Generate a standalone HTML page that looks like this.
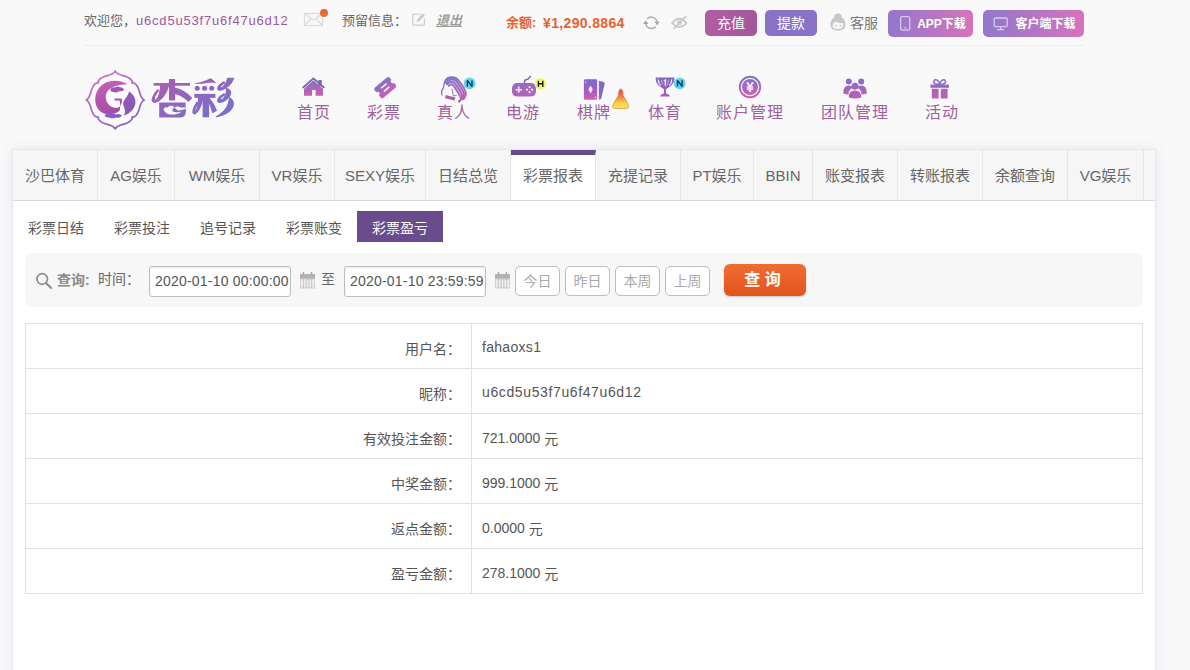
<!DOCTYPE html>
<html lang="zh">
<head>
<meta charset="utf-8">
<title>彩票盈亏</title>
<style>
*{box-sizing:border-box;margin:0;padding:0}
html,body{width:1190px;height:670px;overflow:hidden}
body{background:#f9f9f9;font-family:"Liberation Sans","Noto Sans CJK SC",sans-serif;font-size:13px;color:#666;position:relative}
.abs{position:absolute;white-space:nowrap}
/* top bar */
.top{position:absolute;left:0;top:0;width:1190px;height:45px}
.top .t{position:absolute;top:12px;height:18px;line-height:18px;font-size:13px;color:#666;white-space:nowrap}
.hr{position:absolute;left:84px;top:45px;width:1000px;height:1px;background:#ededed}
.btn{position:absolute;top:10px;height:26px;line-height:27px;border-radius:5px;color:#fff;font-size:14px;text-align:center;white-space:nowrap}
/* nav */
.nav{position:absolute;top:103px;white-space:nowrap;color:#a05f9d;font-size:16px;line-height:20px;letter-spacing:1px}
.badge{position:absolute;width:12px;height:12px;border-radius:6px;font-size:9px;line-height:12px;font-weight:bold;text-align:center;color:#123}
/* main box */
.main{position:absolute;left:12px;top:149px;width:1144px;height:540px;background:#fff;border:1px solid #e9e6ee;box-shadow:0 0 11px rgba(170,150,215,.2)}
.tabs{position:absolute;left:0;top:0;width:1142px;height:51px;background:#f7f6f6;border-bottom:1px solid #d8d8d8}
.tab{position:absolute;top:0;height:50px;line-height:52px;font-size:15px;color:#666;text-align:center;border-right:1px solid #e6e6e6;white-space:nowrap}
.tab.on{background:#fff;border-top:5px solid #674c8c;line-height:42px}
.sub{position:absolute;top:61px;height:31px;line-height:34px;width:86px;text-align:center;font-size:14px;color:#555;white-space:nowrap}
.sub.on{background:#6a4c8c;color:#fff}
.q{position:absolute;left:12px;top:103px;width:1118px;height:54px;background:#f7f7f7;border-radius:8px}
.q .x{position:absolute;font-size:14px;color:#666;white-space:nowrap;line-height:20px}
.inp{position:absolute;top:13px;height:31px;width:142px;border:1px solid #bdbdbd;border-radius:3px;background:#fff;font-size:14px;line-height:29px;padding-left:5px;color:#555;letter-spacing:.2px;box-shadow:inset 0 1px 2px rgba(0,0,0,.08);white-space:nowrap;overflow:hidden}
.sb{position:absolute;top:13px;width:45px;height:30px;border:1px solid #bcbcbc;border-radius:5px;background:#fff;color:#aaa;font-size:14px;line-height:28px;text-align:center}
.go{position:absolute;left:699px;text-indent:-5px;top:11px;width:82px;height:32px;border-radius:6px;background:linear-gradient(#f06c33,#e2541d);color:#fff;font-size:16px;font-weight:bold;line-height:32px;text-align:center;box-shadow:0 1px 2px rgba(0,0,0,.2)}
table{table-layout:fixed;position:absolute;left:12px;top:173px;width:1118px;border-collapse:collapse;font-size:14px;color:#555}
td{border:1px solid #e0e0e0;height:45px;vertical-align:middle;white-space:nowrap}
td.l{width:446px;text-align:right;padding-right:10px;padding-top:3px}
td.v{padding-left:10px;padding-top:3px}
.n{position:relative;top:-1px}
</style>
</head>
<body>
<div class="top">
  <span class="t" style="left:84px">欢迎您，</span>
  <span class="t" style="left:136px;color:#9b5a99;letter-spacing:.8px">u6cd5u53f7u6f47u6d12</span>
  <span class="t" style="left:342px">预留信息：</span>
  <span class="t" style="left:436px;color:#9e9e9e;font-style:italic;font-weight:bold;text-decoration:underline">退出</span>
  <span class="t" style="left:506px;top:14px;color:#e8632e;font-weight:bold">余额:</span>
  <span class="t" style="left:543px;top:14px;color:#e8632e;font-weight:bold;font-size:14px;letter-spacing:.35px">¥1,290.8864</span>
  <div class="btn" style="left:705px;width:52px;background:linear-gradient(90deg,#b15ea3,#a4579b)">充值</div>
  <div class="btn" style="left:765px;width:52px;background:#8a72c8">提款</div>
  <span class="t" style="left:850px;top:14px;font-size:14px;color:#777">客服</span>
  <div class="btn" style="left:888px;width:85px;height:27px;line-height:28px;font-size:12px;font-weight:bold;background:linear-gradient(90deg,#8f78cd,#d873bb);padding-left:22px">APP下载</div>
  <div class="btn" style="left:983px;width:101px;height:27px;line-height:28px;font-size:12px;font-weight:bold;background:linear-gradient(90deg,#8f78cd,#d873bb);padding-left:24px">客户端下载</div>
</div>
<div class="hr"></div>


<!-- header icons -->
<svg class="abs" style="left:0;top:0" width="1190" height="140" viewBox="0 0 1190 140">
<defs>
<linearGradient id="g" x1="0" y1="0" x2="0" y2="1"><stop offset="0" stop-color="#8670c9"></stop><stop offset="1" stop-color="#c95fb1"></stop></linearGradient>
<linearGradient id="gl" gradientUnits="userSpaceOnUse" x1="152" y1="78" x2="184.4" y2="142.8"><stop offset="0" stop-color="#b45ab0"></stop><stop offset=".5" stop-color="#8c66c2"></stop><stop offset="1" stop-color="#7472d2"></stop></linearGradient>
<linearGradient id="ge" x1="0" y1="0" x2="0.6" y2="1"><stop offset="0" stop-color="#cf74c4"></stop><stop offset="1" stop-color="#8a68c0"></stop></linearGradient>
<linearGradient id="gc" x1="0" y1="0" x2="0.3" y2="1"><stop offset="0" stop-color="#c662b4"></stop><stop offset="1" stop-color="#a54ea6"></stop></linearGradient>
<linearGradient id="gh" gradientUnits="userSpaceOnUse" x1="446" y1="76" x2="462" y2="100"><stop offset="0" stop-color="#7f72cc"></stop><stop offset="1" stop-color="#b95db4"></stop></linearGradient>
<linearGradient id="gt" x1="0" y1="0" x2="0" y2="1"><stop offset="0" stop-color="#8068c4"></stop><stop offset="1" stop-color="#ac5cb2"></stop></linearGradient>
<linearGradient id="gu" gradientUnits="userSpaceOnUse" x1="0" y1="77" x2="0" y2="99"><stop offset="0" stop-color="#8270ca"></stop><stop offset="1" stop-color="#c05eb2"></stop></linearGradient>
<linearGradient id="gd" x1="0" y1="0" x2="0" y2="1"><stop offset="0" stop-color="#f25a40"></stop><stop offset="1" stop-color="#e8742c"></stop></linearGradient>
</defs>
<!-- envelope -->
<g fill="none" stroke="#dcdcdc" stroke-width="1.2">
<rect x="304.5" y="13.5" width="18" height="12" fill="#f8f8f8"></rect>
<path d="M304.5 13.5L313.5 20L322.5 13.5M304.5 25.5L311.2 18.4M322.5 25.5L315.8 18.4"></path>
</g>
<circle cx="324" cy="13" r="4" fill="url(#gd)"></circle>
<!-- edit -->
<path d="M420.6 14.2H413.6Q412.8 14.2 412.8 15V24.4Q412.8 25.2 413.6 25.2H423.6Q424.4 25.2 424.4 24.4V18.6" fill="none" stroke="#d0d0d0" stroke-width="1.3"></path>
<path d="M416.6 21.8L417.4 19.2L422.8 13.4L424.8 15.2L419.2 21.2Z" fill="#cacaca"></path>
<!-- refresh -->
<g fill="none" stroke="#adadad" stroke-width="1.4">
<path d="M647.0 19.1A5.7 5.7 0 0 1 657.0 22.0"></path>
<path d="M655.8 26.5A5.7 5.7 0 0 1 645.8 23.6"></path>
</g>
<path d="M654.5 21.6H659.7L657.1 25.4Z" fill="#a6a6a6"></path>
<path d="M643.1 24.0H648.3L645.7 20.2Z" fill="#a6a6a6"></path>
<!-- eye slash -->
<g fill="none" stroke="#c9c9c9" stroke-width="1.9">
<path d="M672.2 22.8Q679.4 14.6 686.4 22.8Q679.4 31 672.2 22.8Z"></path>
<circle cx="679.4" cy="22.8" r="1.6" stroke-width="1.6"></circle>
<path d="M686.2 16.2L673.6 29" stroke-width="1.7"></path>
</g>
<!-- service head -->
<g>
<path d="M838 13.4C840.8 13.4 842.2 15.6 841.6 17.4C844.4 18.6 845.7 21.6 845.5 25C845.3 28.6 842 30.7 838 30.7C834 30.7 830.7 28.6 830.5 25C830.3 21.6 831.6 18.6 834.4 17.4C833.8 15.6 835.2 13.4 838 13.4Z" fill="#c8c8c8"></path>
<path d="M832.6 25.4Q833 22.6 835.8 21.4Q838.6 23.4 843.2 23.2Q844 28.9 838 29Q832.4 28.9 832.6 25.4Z" fill="#f7f7f7"></path>
<circle cx="835.7" cy="25.7" r=".85" fill="#c4c4c4"></circle><circle cx="840.5" cy="25.7" r=".85" fill="#c4c4c4"></circle>
</g>
<!-- phone -->
<g fill="none" stroke="#d9c9ef" stroke-width="1.3">
<rect x="900.6" y="16.6" width="9.2" height="13.6" rx="1.8"></rect>
<path d="M903.8 28H906.6" stroke-width="1"></path>
</g>
<!-- monitor -->
<g fill="none" stroke="#d9c9ef" stroke-width="1.3">
<rect x="994.2" y="18" width="13" height="8.6" rx="1"></rect>
<path d="M1000.7 26.6V29.4M997.2 29.6H1004.2"></path>
</g>

<!-- home -->
<path d="M318.4 80H321.8V86H318.4Z" fill="#8068b8"></path>
<path d="M302.7 87.9L313.4 78.4L324.3 87.9" fill="none" stroke="#7562ac" stroke-width="1.9"></path>
<path d="M313.4 80.3L304 88.7V95.8H312V90H315.6V95.8H323V88.7Z" fill="url(#g)"></path>
<!-- ticket -->
<g transform="translate(385.2 87.6) rotate(-40)" fill="url(#g)">
<path fill-rule="evenodd" d="M-9.8 -4.6A2 2 0 0 1 -7.8 -6.6H7.8A2 2 0 0 1 9.8 -4.6V-2A2 2 0 0 0 9.8 2V4.6A2 2 0 0 1 7.8 6.6H-7.8A2 2 0 0 1 -9.8 4.6V2A2 2 0 0 0 -9.8 -2ZM-3.6 -2.9V-1.4H3.6V-2.9ZM-3.6 1.4V2.9H3.6V1.4Z"></path>
</g>
<!-- girl -->
<path transform="translate(0 1.2)" d="M445 80.4C446.6 75.2 455 74 458.6 79.2C461 82.8 464.2 85.6 465.6 90.2C466.6 94 464.6 97 462.6 98.2L460 97.6C458.8 92.6 455.8 88.6 454.4 85.6C453.2 83.2 450.8 82.4 448.6 84.6Z" fill="url(#gh)" opacity=".45"></path>
<g fill="none" stroke="url(#gh)" stroke-width="1.75" stroke-linecap="round" transform="translate(0 1.2)">
<path d="M445 80.4C446.6 75.2 455 74 458.6 79.2C461 82.8 464.2 85.6 465.6 90.2C466.6 94 464.6 97 462.6 98.2"></path>
<path d="M445.8 81.8C448.6 77 454.6 77 457.2 80.8C459.2 84.4 462.4 87.4 463.8 91.4C464.6 94.4 463.2 96.4 461.4 97.6C460.6 98.8 460 99.8 459.2 100.6"></path>
<path d="M446.8 83.2C449.8 79.6 454 80.2 455.8 83.4C457.6 86.6 460.6 89.6 461.8 93C462.4 95 461.4 96.6 460.2 97.4"></path>
<path d="M448.6 84.6C450.8 82.4 453.2 83.2 454.4 85.6C455.8 88.6 458.6 91.6 459.8 94.8"></path>
<path d="M447.4 78.4C450.6 76.2 454.6 76.4 457 79" stroke-width="1"></path>
<path d="M445 80.4C443.4 83 444.2 85.6 442.8 87.8C441.2 89.6 441.2 91.6 442.2 93.8" stroke-width="1.3"></path>
<path d="M452.2 88C452.4 91 452.8 93.4 453.4 94.6L456.2 94.4" stroke-width="1"></path>
</g>
<path d="M445.8 95L455.4 97.6L454.6 100.6L445 98.2Z" fill="#b45cb0"></path>
<circle cx="459.2" cy="100.8" r=".9" fill="#6a5a9a"></circle>
<circle cx="469.6" cy="83.4" r="5.9" fill="#5fd6ea"></circle>
<path d="M467.4 86.6V80.4L472.0 86.6V80.4" fill="none" stroke="#0b3468" stroke-width="1.35" stroke-linejoin="bevel"></path>
<!-- gamepad -->
<g fill="url(#gu)">
<path d="M517.6 83H530.4Q536 83 536 88.6V91Q536 96.6 530.4 96.6H517.6Q512 96.6 512 91V88.6Q512 83 517.6 83Z"></path>
</g>
<path d="M524.4 82.6Q524.4 79.6 526.6 79.4Q528.4 79.4 529 78Q529.4 76.8 530.6 76.6" fill="none" stroke="#7d68c0" stroke-width="1.5" stroke-linecap="round"></path>
<path d="M517.9 86.6H519.5V88.9H521.8V90.5H519.5V92.8H517.9V90.5H515.6V88.9H517.9Z" fill="#f6eafa"></path>
<circle cx="529.6" cy="87.2" r="1.1" fill="#f6eafa"></circle><circle cx="529.6" cy="92.2" r="1.1" fill="#f6eafa"></circle><circle cx="527.1" cy="89.7" r="1.1" fill="#f6eafa"></circle><circle cx="532.1" cy="89.7" r="1.1" fill="#f6eafa"></circle>
<circle cx="540.5" cy="83.8" r="5.9" fill="#f3f46e"></circle>
<path d="M538.4 80.7V86.9M542.8 80.7V86.9M538.4 83.7H542.8" fill="none" stroke="#161616" stroke-width="1.35"></path>
<!-- cards -->
<defs><linearGradient id="gk" x1="0" y1="0" x2="0" y2="1"><stop offset="0" stop-color="#7d69c9"></stop><stop offset=".55" stop-color="#a45dc0"></stop><stop offset="1" stop-color="#d85cb2"></stop></linearGradient>
<linearGradient id="fl" x1="0" y1="0" x2="0" y2="1"><stop offset="0" stop-color="#ee5350"></stop><stop offset=".3" stop-color="#ee6648"></stop><stop offset=".5" stop-color="#f29a44"></stop><stop offset=".75" stop-color="#f6d948"></stop><stop offset="1" stop-color="#f3e35c"></stop></linearGradient>
<linearGradient id="fs" x1="0" y1="0" x2="0" y2="1"><stop offset="0" stop-color="#ee5350"></stop><stop offset=".45" stop-color="#e8803c"></stop><stop offset="1" stop-color="#e6a848"></stop></linearGradient></defs>
<g>
<path d="M598.9 80.8L603.6 81.9Q605 82.3 604.7 83.7L601.2 98.4Q600.9 99.6 599.6 99.5L598.9 99.5Z" fill="#8068c4"></path>
<rect x="583.9" y="79.2" width="13.3" height="20.6" rx="1.4" fill="url(#gk)"></rect>
<path d="M590.6 85.4L592.8 89.4L590.6 93.4L588.4 89.4Z" fill="#f6ecfa"></path>
<path d="M585.4 81L586.6 82.8L585.9 83.4L584.8 81.6Z" fill="#e6d6f4"></path>
<path d="M595.6 96.2L596.6 97.8L595.8 98.6L594.8 97Z" fill="#f3cfe8"></path>
</g>
<!-- flame -->
<path d="M620.7 88.8C622.6 90 623.2 92.6 622.9 95.6C625 98.4 627.4 102.4 628.6 106C629 107.6 628.4 108.5 627 108.5L614.4 108.5C613 108.5 612.4 107.6 612.8 106C614 102.4 616.6 98.4 618.6 95.6C618.3 92.6 619 90 620.7 88.8Z" fill="url(#fl)" stroke="url(#fs)" stroke-width=".9"></path>
<!-- trophy -->
<path d="M655.6 77.6H674.4Q674.6 84.5 668.6 87.4Q666.6 88.4 666.1 89.6V93.4Q669.5 93.9 670 96.6H660Q660.5 93.9 663.9 93.4V89.6Q663.4 88.4 661.4 87.4Q655.4 84.5 655.6 77.6Z" fill="url(#gt)"></path>
<g fill="none" stroke="#f5eefb" stroke-width="1.15">
<path d="M658.3 79.6Q658.3 83.2 660.6 85.6"></path><path d="M671.7 79.6Q671.7 83.2 669.4 85.6"></path>
<path d="M661.6 79.8Q661.6 82.6 662.6 84.6" stroke-width=".8" opacity=".7"></path><path d="M668.4 79.8Q668.4 82.6 667.4 84.6" stroke-width=".8" opacity=".7"></path>
<path d="M663.9 81L665.4 80V85.8" stroke-width="1.3"></path>
</g>
<circle cx="679.7" cy="83.4" r="5.9" fill="#5fd6ea"></circle>
<path d="M677.5 86.5V80.3L682.1 86.5V80.3" fill="none" stroke="#0b3468" stroke-width="1.35" stroke-linejoin="bevel"></path>
<!-- coin -->
<circle cx="750" cy="87" r="10.2" fill="none" stroke="url(#g)" stroke-width="1.9"></circle>
<circle cx="750" cy="87" r="8" fill="url(#g)"></circle>
<path d="M746.4 82.4H748.2L750 85.6L751.8 82.4H753.6L751.2 86.4H753V87.6H750.8V88.6H753V89.8H750.8V92H749.2V89.8H747V88.6H749.2V87.6H747V86.4H748.8Z" fill="#f7ecfa" stroke="#f7ecfa" stroke-width=".5"></path>
<!-- team -->
<g fill="url(#gu)">
<circle cx="848.8" cy="81.6" r="3"></circle><path d="M843.2 93.6Q843 85.4 848.8 85.4Q851.6 85.4 853 87.4Q848.6 89.6 848.4 94.4Q845 94.6 843.2 93.6Z"></path>
<circle cx="861.2" cy="81.6" r="3"></circle><path d="M866.8 93.6Q867 85.4 861.2 85.4Q858.4 85.4 857 87.4Q861.4 89.6 861.6 94.4Q865 94.6 866.8 93.6Z"></path>
<circle cx="855" cy="86.2" r="3.5"></circle><path d="M848.8 97.6Q848.4 90.4 855 90.4Q861.6 90.4 861.2 97.6Q855 99.6 848.8 97.6Z"></path>
</g>
<!-- gift -->
<g fill="url(#gu)">
<rect x="930.4" y="84.6" width="18.6" height="3.2"></rect>
<path d="M931.8 88.8H938.6V98.6H931.8ZM940.8 88.8H947.6V98.6H940.8Z"></path>
</g>
<path d="M939.7 84.4Q934 84.6 933.8 81.6Q934.6 78.6 937.6 80.4Q939.2 81.8 939.7 84.4Q940.2 81.8 941.8 80.4Q944.8 78.6 945.6 81.6Q945.4 84.6 939.7 84.4Z" fill="none" stroke="#8670c9" stroke-width="1.5"></path>

<!-- logo -->
<g>
<path d="M115.2 71.0C113.6 74.6 108.5 75.2 105.5 76.2C101.5 77.6 97.5 79.8 98.2 83.0C95.0 82.3 92.8 86.3 91.4 90.3C90.4 93.3 89.8 98.4 86.2 100.0C89.8 101.6 90.4 106.7 91.4 109.7C92.8 113.7 95.0 117.7 98.2 117.0C97.5 120.2 101.5 122.4 105.5 123.8C108.5 124.8 113.6 125.4 115.2 129.0C116.8 125.4 121.9 124.8 124.9 123.8C128.9 122.4 132.9 120.2 132.2 117.0C135.4 117.7 137.6 113.7 139.0 109.7C140.0 106.7 140.6 101.6 144.2 100.0C140.6 98.4 140.0 93.3 139.0 90.3C137.6 86.3 135.4 82.3 132.2 83.0C132.9 79.8 128.9 77.6 124.9 76.2C121.9 75.2 116.8 74.6 115.2 71.0Z" fill="#fdf9fd" stroke="url(#ge)" stroke-width="1.8" stroke-linejoin="round"></path>
<path d="M127.5 84.3C123 81.5 118 80.5 114.5 80.7C103 81 95.2 89 95.2 99.5C95.2 108 100.5 113.6 107.2 114.1C112.5 114.5 117.5 113.4 119.7 110.6C120.6 107 120.4 103 119.4 100.6L114.4 100.4L114.6 98.6L121.6 98.4C122.6 102 121.4 106 118.4 107.6C116 108.4 112 107.6 109.6 105.6C105.6 102 104.6 96 107.2 91.8C110.6 86.6 118 84.6 127.5 84.3Z" fill="url(#gc)"></path>
<path d="M110.2 89.4Q112 86.6 115 87.4Q117.4 85.8 120 87.2Q123 87 124.2 90Q121.6 91.8 119 91.2Q116.4 93.2 113.6 92Q110.8 92.2 110.2 89.4Z" fill="#9a56b2"></path>
<path d="M129.1 91.6C133.6 94.6 135.8 98.6 135.4 103C134.6 109 130.2 113.6 123.8 115.6C126.2 111.6 124.6 108.6 123.4 105.6C122.4 101.6 125.6 98.6 127 96.3C128.2 94.6 128.6 93 129.1 91.6Z" fill="#8f58b6"></path>
<path d="M104.4 115.2Q107 112.8 110 114.2Q113.2 112.6 116 114.4Q119.4 113 122 115.4Q120 118.4 116 117.4Q112.6 119.2 109.4 117.4Q106 118.2 104.4 115.2Z" fill="#7c60c6"></path>
</g>
<!-- logo text: xing -->
<g fill="url(#gl)" stroke="none">
<rect x="153.6" y="83" width="36.4" height="2.7"></rect>
<rect x="169" y="79" width="6.1" height="21.4"></rect>
<path stroke="url(#gl)" stroke-width="1.1" stroke-linejoin="round" d="M160.6 85.6H168.6C167 92 162.6 99.6 155.6 102.2C152.6 102.8 151.4 100.4 152.6 97.4C153.6 94.6 155.6 91.6 157.6 89.8L158.6 90.6C156.6 93 154.4 96.6 154.2 99C154.4 100.4 155.6 100.2 156.6 99.4C159.4 96.4 160.4 90.6 160.6 85.6Z"></path>
<path stroke="url(#gl)" stroke-width="1.1" stroke-linejoin="round" d="M175.1 88.4C181.1 89.6 187.6 93.6 191.6 98.2L188.4 101.2C184.6 97.4 179.6 94.4 175.1 93.4Z"></path>
<path fill-rule="evenodd" d="M159.2 102.4H185.6V107.4H180.6C178.6 106.2 175.6 106.2 174.4 108.2C176 108.6 177 109.4 177.4 110.4C180.4 110.6 183.6 109.8 185.8 108.6V112.4C185.4 115.6 183.4 117.6 180.2 117.6H159.2ZM163.6 109.4C163.8 107.6 166 106.8 167.6 107.6C169.2 105.2 173.2 105 174.6 107.6C172.6 108.6 172 110 172.6 111.2C174.6 112.4 178.6 112.4 181.6 111.6C179.6 113.8 175.6 114.8 172.2 114.6C168.6 114.6 164.6 113 163.6 109.4Z"></path>
</g>
<!-- logo text: cai -->
<g fill="url(#gl)" stroke="none">
<path d="M193.6 83.6C200 82.4 206 80.6 210.4 78.2C213 79.6 215 81.4 216.2 83.2C212.6 82.6 208.6 82.6 205.6 83.2C201.6 83.8 197.6 84.2 193.6 83.6Z"></path>
<circle cx="197.3" cy="88.2" r="2.5"></circle><circle cx="204.6" cy="88.2" r="2.5"></circle><circle cx="211.7" cy="88.2" r="2.5"></circle>
<rect x="194.4" y="93.9" width="21" height="4"></rect>
<rect x="202.6" y="93.9" width="6.5" height="23.4"></rect>
<path stroke="url(#gl)" stroke-width="1.1" stroke-linejoin="round" d="M198.6 97.9H202.6C202 103.6 199.6 110 195.6 113.6C193.6 114.8 192.6 113 193 110.6C193.6 107.6 195.4 104 197 102L198 102.6C196.6 105 195.2 108 194.8 110.6C194.8 111.6 195.6 111.4 196.2 110.6C197.8 107.6 198.6 102.6 198.6 97.9Z"></path>
<path stroke="url(#gl)" stroke-width="1.1" stroke-linejoin="round" d="M209.1 98.2C212 101.6 214.6 106 216.4 110.6L212.6 112.4C211.6 108.4 210.4 105 209.1 102.6Z"></path>
<path stroke="url(#gl)" stroke-width="1.1" stroke-linejoin="round" d="M227.6 78.2H233.6C231.6 83.6 226.6 88.6 220.6 90.2C218 90.6 217 88.8 218.2 86.8C219.4 84.8 222 82.8 224 81.8L224.6 82.8C222.8 84 220.6 85.8 220.2 87.2C220.2 88.2 221.4 88 222.4 87.4C225 85.4 226.8 82 227.6 78.2Z"></path>
<path stroke="url(#gl)" stroke-width="1.1" stroke-linejoin="round" d="M226.6 88.6C229.6 89.2 231.2 91.4 230.6 94C229.2 98.4 224.6 101.6 220.2 102.4C217.8 102.6 217 100.8 218.2 98.8C219.4 96.8 222 94.8 224 93.8L224.6 94.8C222.8 96 220.6 97.8 220.2 99.2C220.4 100.2 221.6 100 222.6 99.4C225 97.4 226.6 93.6 226.6 88.6Z"></path>
<path stroke="url(#gl)" stroke-width="1.1" stroke-linejoin="round" d="M229.6 97.6C232.6 99.6 234 102.6 233.2 105.6C231.2 111.6 224 116 216.2 116.8C221.6 113.6 226.6 108.6 228 104.6C228.8 102 229.4 99.6 229.6 97.6Z"></path>
</g>
</svg>

<!-- NAV -->
<span class="nav" style="left:297px">首页</span>
<span class="nav" style="left:367px">彩票</span>
<span class="nav" style="left:437px">真人</span>
<span class="nav" style="left:506px">电游</span>
<span class="nav" style="left:577px">棋牌</span>
<span class="nav" style="left:648px">体育</span>
<span class="nav" style="left:716px">账户管理</span>
<span class="nav" style="left:821px">团队管理</span>
<span class="nav" style="left:925px">活动</span>

<div class="main">
  <div class="tabs">
    <div class="tab" style="left:0;width:85px">沙巴体育</div>
    <div class="tab" style="left:85px;width:77px">AG娱乐</div>
    <div class="tab" style="left:162px;width:85px">WM娱乐</div>
    <div class="tab" style="left:247px;width:75px">VR娱乐</div>
    <div class="tab" style="left:322px;width:91px">SEXY娱乐</div>
    <div class="tab" style="left:413px;width:85px">日结总览</div>
    <div class="tab on" style="left:498px;width:85px">彩票报表</div>
    <div class="tab" style="left:583px;width:85px">充提记录</div>
    <div class="tab" style="left:668px;width:73px">PT娱乐</div>
    <div class="tab" style="left:741px;width:59px">BBIN</div>
    <div class="tab" style="left:800px;width:85px">账变报表</div>
    <div class="tab" style="left:885px;width:85px">转账报表</div>
    <div class="tab" style="left:970px;width:85px">余额查询</div>
    <div class="tab" style="left:1055px;width:76px">VG娱乐</div>
  </div>
  <div class="sub" style="left:0">彩票日结</div>
  <div class="sub" style="left:86px">彩票投注</div>
  <div class="sub" style="left:172px">追号记录</div>
  <div class="sub" style="left:258px">彩票账变</div>
  <div class="sub on" style="left:344px">彩票盈亏</div>

  <div class="q">
    <span class="x" style="left:32px;top:17px;font-weight:bold;color:#8a8a8a">查询:</span>
    <span class="x" style="left:73px;top:16px">时间：</span>
    <div class="inp" style="left:124px">2020-01-10 00:00:00</div>
    <span class="x" style="left:296px;top:16px">至</span>
    <div class="inp" style="left:319px">2020-01-10 23:59:59</div>
    <div class="sb" style="left:490px">今日</div>
    <div class="sb" style="left:540px">昨日</div>
    <div class="sb" style="left:590px">本周</div>
    <div class="sb" style="left:640px">上周</div>
    <div class="go">查 询</div>
  </div>

  <table>
    <tbody><tr><td class="l">用户名：</td><td class="v" style="letter-spacing:.3px"><span class="n">fahaoxs1</span></td></tr>
    <tr><td class="l">昵称：</td><td class="v" style="letter-spacing:.62px"><span class="n">u6cd5u53f7u6f47u6d12</span></td></tr>
    <tr><td class="l">有效投注金额：</td><td class="v"><span class="n">721.0000</span> 元</td></tr>
    <tr><td class="l">中奖金额：</td><td class="v"><span class="n">999.1000</span> 元</td></tr>
    <tr><td class="l">返点金额：</td><td class="v"><span class="n">0.0000</span> 元</td></tr>
    <tr><td class="l">盈亏金额：</td><td class="v"><span class="n">278.1000</span> 元</td></tr>
  </tbody></table>
</div>
<svg class="abs" style="left:0;top:250px;z-index:5" width="1190" height="60" viewBox="0 250 1190 60">
<!-- search -->
<circle cx="42.2" cy="279" r="5.3" fill="none" stroke="#8a8a8a" stroke-width="1.7"></circle>
<path d="M46.2 283.2L51.2 288" stroke="#8a8a8a" stroke-width="2" stroke-linecap="round"></path>
<g><rect x="300" y="274" width="15" height="5" fill="#b2b2b2"></rect><rect x="302.8" y="272" width="1.4" height="3" fill="#a8a8a8"></rect><rect x="310.8" y="272" width="1.4" height="3" fill="#a8a8a8"></rect><rect x="300.5" y="279" width="14" height="9" fill="#f4f4f4" stroke="#cfcfcf" stroke-width="1"></rect><path d="M303.3 279V288" stroke="#bdbdbd" stroke-width="1.1"></path><path d="M306.1 279V288" stroke="#bdbdbd" stroke-width="1.1"></path><path d="M308.9 279V288" stroke="#bdbdbd" stroke-width="1.1"></path><path d="M311.7 279V288" stroke="#bdbdbd" stroke-width="1.1"></path><path d="M300.5 282H314.5M300.5 285H314.5" stroke="#e2e2e2" stroke-width=".8"></path></g>
<g><rect x="495" y="274" width="15" height="5" fill="#b2b2b2"></rect><rect x="497.8" y="272" width="1.4" height="3" fill="#a8a8a8"></rect><rect x="505.8" y="272" width="1.4" height="3" fill="#a8a8a8"></rect><rect x="495.5" y="279" width="14" height="9" fill="#f4f4f4" stroke="#cfcfcf" stroke-width="1"></rect><path d="M498.3 279V288" stroke="#bdbdbd" stroke-width="1.1"></path><path d="M501.1 279V288" stroke="#bdbdbd" stroke-width="1.1"></path><path d="M503.9 279V288" stroke="#bdbdbd" stroke-width="1.1"></path><path d="M506.7 279V288" stroke="#bdbdbd" stroke-width="1.1"></path><path d="M495.5 282H509.5M495.5 285H509.5" stroke="#e2e2e2" stroke-width=".8"></path></g>
</svg>
</body>
</html>
